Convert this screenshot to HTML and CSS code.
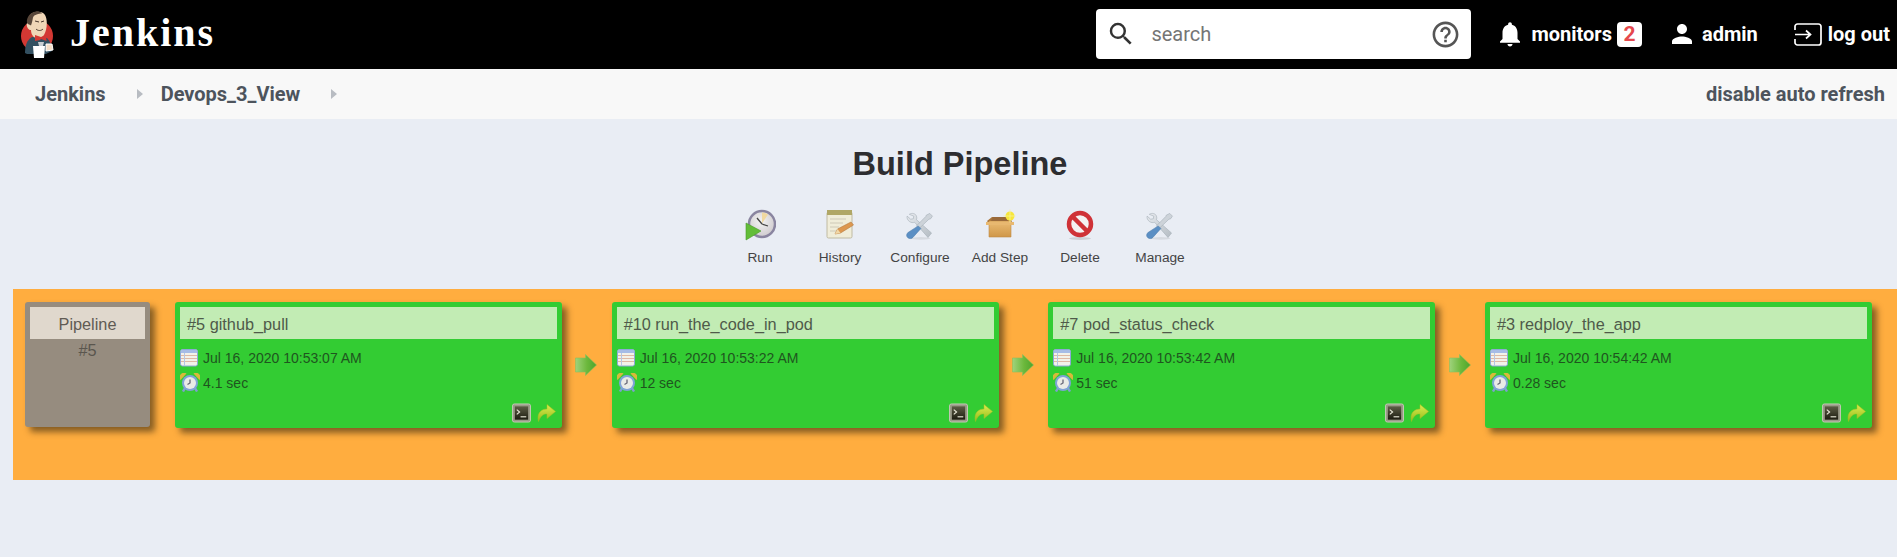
FILE: index.html
```html
<!DOCTYPE html>
<html lang="en">
<head>
<meta charset="utf-8">
<title>Build Pipeline [Jenkins]</title>
<link rel="stylesheet" href="styles.css">
</head>
<body>
<svg class="sprites" width="0" height="0" aria-hidden="true">
  <defs>
    <linearGradient id="gArrow" x1="0" y1="0" x2="1" y2="0"><stop offset="0" stop-color="#9fd27c"/><stop offset=".55" stop-color="#6cb83c"/><stop offset="1" stop-color="#4ea52c"/></linearGradient>
    <linearGradient id="gRedo" x1="0" y1="0" x2="0" y2="1"><stop offset="0" stop-color="#dcec4e"/><stop offset="1" stop-color="#93bc1c"/></linearGradient>
    <linearGradient id="gWrench" x1="0" y1="0" x2="1" y2="1"><stop offset="0" stop-color="#e8ebef"/><stop offset="1" stop-color="#b4bcc3"/></linearGradient>
    <linearGradient id="gBox" x1="0" y1="0" x2="0" y2="1"><stop offset="0" stop-color="#ecbd74"/><stop offset="1" stop-color="#cf9749"/></linearGradient>
    <linearGradient id="gConsole" x1="0" y1="0" x2="0" y2="1"><stop offset="0" stop-color="#5d5d46"/><stop offset="1" stop-color="#1c1c10"/></linearGradient>
    <radialGradient id="gClock" cx=".45" cy=".4" r=".7"><stop offset="0" stop-color="#f4f4f4"/><stop offset="1" stop-color="#c9c4c8"/></radialGradient>
    <symbol id="i-calendar" viewBox="0 0 18 18">
      <rect x=".5" y=".5" width="17" height="16.500" rx="2" fill="#f2f2ea" stroke="#8fa8d8"/>
      <rect x="1" y="1" width="16" height="3" fill="#a6bce6"/>
      <path d="M1 6.500h16M1 9.500h16M1 12.500h16" stroke="#dfb9a4" stroke-width="1"/>
      <path d="M4.500 4v13" stroke="#b6c6e4" stroke-width="1"/>
    </symbol>
    <symbol id="i-clock" viewBox="0 0 20 19">
      <path d="M5 15l-2 3.500M15 15l2 3.500" stroke="#7f9fd0" stroke-width="2.400"/>
      <path d="M.5 7a4.500 4.500 0 0 1 6-6.500zM19.500 7a4.500 4.500 0 0 0-6-6.500z" fill="#d9b93a"/>
      <circle cx="10" cy="10" r="8" fill="#7fa3d8"/>
      <circle cx="10" cy="10" r="6" fill="#e9ebe6"/>
      <path d="M10 6.500V10l-2.500 1.500" stroke="#667" stroke-width="1.300" fill="none"/>
    </symbol>
    <symbol id="i-arrow" viewBox="0 0 22 22">
      <path d="M.5 4h10V.5L21.500 11l-11 10.500V18H.5z" fill="url(#gArrow)" stroke="#8abf5e" stroke-width=".6"/>
    </symbol>
    <symbol id="i-console" viewBox="0 0 20 20">
      <rect x=".5" y=".5" width="19" height="19" rx="2" fill="#9a9a88" stroke="#c8c8ba"/>
      <rect x="3" y="3" width="14" height="14" fill="url(#gConsole)"/>
      <path d="M5 6.500l3 2.500-3 2.500" stroke="#e8e8d8" stroke-width="1.200" fill="none"/>
      <path d="M9 14h6" stroke="#e8e8d8" stroke-width="1.200"/>
    </symbol>
    <symbol id="i-redo" viewBox="0 0 19 19">
      <path d="M1.500 18C-.5 10 4 5.500 10 5.500V1l8.500 7-8.500 7v-4.500C6.500 10 3.500 12.500 1.500 18z" fill="url(#gRedo)" stroke="#a5c01e" stroke-width=".5"/>
    </symbol>
    <symbol id="i-tools" viewBox="-2 -3 36 36">
      <path d="M4 3c3-2 7-1 8 2 .6 1.700.4 3 0 4l17 15-4 5L10 12c-2 .6-4 .4-6-1-2-1.500-3-4-2.500-6l4 3.500 3-.5.500-3z" fill="url(#gWrench)" stroke="#a7b0b8" stroke-width=".7"/>
      <path d="M27 2l3 3-2 3-2 .5L15 19l-3-3L22.500 5.500 23 4z" fill="#cdd3d9" stroke="#a7b0b8" stroke-width=".7"/>
      <path d="M14 16l3 3-9 10c-2 2-4.500 1.500-6 0S.5 25.500 2.500 23.500z" fill="#5b8fc4" stroke="#4a7aaa" stroke-width=".6"/>
      <ellipse cx="17" cy="30" rx="11" ry="1.500" fill="#000" opacity=".08"/>
    </symbol>
  </defs>
</svg>

<header class="topbar">
  <a class="brand">
    <svg class="logo" viewBox="0 0 38 48" width="38" height="48" aria-hidden="true">
      <circle cx="18" cy="25" r="16" fill="#d33833"/>
      <path d="M6 42c0-8 2-13 7-16l15 1c3 3 5 8 5 13l-6 3H8z" fill="#335061"/>
      <path d="M10 6c2-6 13-7 16-2 3 5 2 15-1 20-3 4-9 4-11 1-1-1-2-3-2-6-3 0-5-4-4-7 1-1 2-1 2-1z" fill="#f0d6b7"/>
      <path d="M8 12C7 6 12 .5 18 .5c2 0 4 .5 5 2-3 0-8 1-9 4-.5 3-1 5-2 8-1-1-3-1-4-2.500z" fill="#59473a"/>
      <path d="M16 10l4 1M22 11l3-1M17 18c2 2 5 2 7 0" stroke="#49372c" stroke-width="1" fill="none"/>
      <path d="M16 24l6 2 5-2 .5 6-5.500-2-1 1-5 1z" fill="#d33833"/>
      <path d="M19 31h6l-1 4h-4z" fill="#c9ced2"/>
      <path d="M14 35h12l-1 12H15z" fill="#fff"/>
      <path d="M27 33h6l1 6-7 1z" fill="#f4ddc6" stroke="#fff"/>
    </svg>
    <span class="brand-name">Jenkins</span>
  </a>
  <div class="search">
    <svg class="search-icon" viewBox="0 0 24 24" aria-hidden="true"><path d="M15.500 14h-.790l-.280-.270A6.470 6.470 0 0 0 16 9.500 6.500 6.500 0 1 0 9.500 16c1.610 0 3.090-.590 4.230-1.570l.270.280v.790l5 4.990L20.490 19l-4.990-5zm-6 0C7.010 14 5 11.990 5 9.500S7.010 5 9.500 5 14 7.010 14 9.500 11.990 14 9.500 14z"/></svg>
    <span class="search-text">search</span>
    <svg class="help-icon" viewBox="0 0 24 24" aria-hidden="true"><path d="M11 18h2v-2h-2v2zm1-16C6.480 2 2 6.480 2 12s4.480 10 10 10 10-4.480 10-10S17.520 2 12 2zm0 18c-4.410 0-8-3.590-8-8s3.590-8 8-8 8 3.590 8 8-3.590 8-8 8zm0-14c-2.210 0-4 1.790-4 4h2c0-1.100.9-2 2-2s2 .9 2 2c0 2-3 1.750-3 5h2c0-2.250 3-2.500 3-5 0-2.210-1.790-4-4-4z"/></svg>
  </div>
  <nav class="top-actions">
    <a class="top-link monitors">
      <svg class="top-icon" viewBox="0 0 24 24" aria-hidden="true"><path d="M12 22c1.100 0 2-.9 2-2h-4c0 1.100.9 2 2 2zm6-6v-5c0-3.070-1.630-5.640-4.500-6.320V4c0-.830-.670-1.500-1.500-1.500s-1.500.670-1.500 1.500v.680C7.640 5.360 6 7.920 6 11v5l-2 2v1h16v-1l-2-2z"/></svg>
      <span class="monitors-label">monitors</span><span class="badge">2</span>
    </a>
    <a class="top-link admin">
      <svg class="top-icon" viewBox="0 0 24 24" aria-hidden="true"><path d="M12 12c2.210 0 4-1.790 4-4s-1.790-4-4-4-4 1.790-4 4 1.790 4 4 4zm0 2c-2.670 0-8 1.340-8 4v2h16v-2c0-2.660-5.330-4-8-4z"/></svg>
      <span>admin</span>
    </a>
    <a class="top-link logout">
      <svg class="logout-icon" viewBox="0 0 28 23" aria-hidden="true"><path d="M1 7V3.500A2.500 2.500 0 0 1 3.500 1h21A2.500 2.500 0 0 1 27 3.500v16a2.500 2.500 0 0 1-2.500 2.500h-21A2.500 2.500 0 0 1 1 19.500V16" fill="none" stroke="#fff" stroke-width="1.700"/><path d="M1 11.500h15M12 7.500l4.500 4-4.500 4" fill="none" stroke="#fff" stroke-width="1.700"/></svg>
      <span>log out</span>
    </a>
  </nav>
</header>

<div class="crumbs">
  <a class="crumb">Jenkins</a><span class="caret"></span>
  <a class="crumb">Devops_3_View</a><span class="caret"></span>
  <a class="refresh">disable auto refresh</a>
</div>

<main class="page">
  <h1 class="title">Build Pipeline</h1>
  <ul class="tools">
    <li class="tool">
      <svg class="tool-icon" viewBox="0 0 32 32" aria-hidden="true">
        <circle cx="18" cy="15" r="13" fill="url(#gClock)" stroke="#8a85a0" stroke-width="2.500"/>
        <path d="M18 3.500a11.500 11.500 0 0 1 6 2l-6 9z" fill="#f0d8a0"/>
        <path d="M18 15l-5-6M18 15l6 2" stroke="#444" stroke-width="1.300"/>
        <path d="M2 14l15 8-15 9z" fill="#62bd38" stroke="#4a9a28" stroke-width=".6"/>
      </svg>
      <span>Run</span>
    </li>
    <li class="tool">
      <svg class="tool-icon" viewBox="0 0 32 32" aria-hidden="true">
        <rect x="3" y="3" width="25" height="26" rx="1.500" fill="#f0edd9" stroke="#bfbaa2"/>
        <rect x="3" y="1" width="25" height="5" fill="#b0a766"/>
        <path d="M6 10h16M6 14h13M6 18h9M6 22h7" stroke="#cdc9b8" stroke-width="1.200"/>
        <path d="M11 25l2.500-5L27 13l2.500 3-13 8z" fill="#dd9850" stroke="#b57a40" stroke-width=".6"/>
        <path d="M11 25l2.500-5 3 4z" fill="#f0d8a8"/>
      </svg>
      <span>History</span>
    </li>
    <li class="tool">
      <svg class="tool-icon" aria-hidden="true"><use href="#i-tools"/></svg>
      <span>Configure</span>
    </li>
    <li class="tool">
      <svg class="tool-icon" viewBox="0 0 32 32" aria-hidden="true">
        <path d="M3 12l5-4h15l5 4-2 3H5z" fill="#a9743a"/>
        <path d="M5 12h22v16H5z" fill="url(#gBox)" stroke="#c08c44" stroke-width=".6"/>
        <path d="M9 8h13l2 4H7z" fill="#99693a"/>
        <path d="M2 13h28v3H2z" fill="#e8b870"/>
        <circle cx="26" cy="7" r="4.500" fill="#f7e63a"/>
        <path d="M26 .5v13M19.500 7h12" stroke="#f7f29a" stroke-width=".8"/>
      </svg>
      <span>Add Step</span>
    </li>
    <li class="tool">
      <svg class="tool-icon" viewBox="0 0 32 32" aria-hidden="true">
        <circle cx="16" cy="15" r="11" fill="#f4f2f2" stroke="#cf3237" stroke-width="4.500"/>
        <path d="M8.500 7.500l15 15" stroke="#cf3237" stroke-width="4.500"/>
        <ellipse cx="16" cy="29.500" rx="11" ry="1.500" fill="#000" opacity=".12"/>
      </svg>
      <span>Delete</span>
    </li>
    <li class="tool">
      <svg class="tool-icon" aria-hidden="true"><use href="#i-tools"/></svg>
      <span>Manage</span>
    </li>
  </ul>

  <section class="pipeline">
    <article class="box revision">
      <div class="box-head">Pipeline</div>
      <div class="box-rev">#5</div>
    </article>

    <article class="box build">
      <div class="box-head">#5 github_pull</div>
      <div class="meta"><svg class="meta-icon"><use href="#i-calendar"/></svg>Jul 16, 2020 10:53:07 AM</div>
      <div class="meta"><svg class="clock-icon"><use href="#i-clock"/></svg>4.1 sec</div>
      <div class="box-actions"><svg class="act"><use href="#i-console"/></svg><svg class="act"><use href="#i-redo"/></svg></div>
    </article>
    <div class="link"><svg class="link-arrow"><use href="#i-arrow"/></svg></div>

    <article class="box build">
      <div class="box-head">#10 run_the_code_in_pod</div>
      <div class="meta"><svg class="meta-icon"><use href="#i-calendar"/></svg>Jul 16, 2020 10:53:22 AM</div>
      <div class="meta"><svg class="clock-icon"><use href="#i-clock"/></svg>12 sec</div>
      <div class="box-actions"><svg class="act"><use href="#i-console"/></svg><svg class="act"><use href="#i-redo"/></svg></div>
    </article>
    <div class="link"><svg class="link-arrow"><use href="#i-arrow"/></svg></div>

    <article class="box build">
      <div class="box-head">#7 pod_status_check</div>
      <div class="meta"><svg class="meta-icon"><use href="#i-calendar"/></svg>Jul 16, 2020 10:53:42 AM</div>
      <div class="meta"><svg class="clock-icon"><use href="#i-clock"/></svg>51 sec</div>
      <div class="box-actions"><svg class="act"><use href="#i-console"/></svg><svg class="act"><use href="#i-redo"/></svg></div>
    </article>
    <div class="link"><svg class="link-arrow"><use href="#i-arrow"/></svg></div>

    <article class="box build">
      <div class="box-head">#3 redploy_the_app</div>
      <div class="meta"><svg class="meta-icon"><use href="#i-calendar"/></svg>Jul 16, 2020 10:54:42 AM</div>
      <div class="meta"><svg class="clock-icon"><use href="#i-clock"/></svg>0.28 sec</div>
      <div class="box-actions"><svg class="act"><use href="#i-console"/></svg><svg class="act"><use href="#i-redo"/></svg></div>
    </article>
  </section>
</main>
</body>
</html>
```
FILE: styles.css
```css
* { box-sizing: border-box; }
html, body { margin: 0; padding: 0; height: 100%; overflow: hidden; }
body { background: #e9edf4; font-family: "Liberation Sans", Arial, sans-serif; color: #333; }
.sprites { display: block; width: 0; height: 0; }

.topbar { display: flex; align-items: center; height: 69px; padding-right: 7px; background: #000; color: #fff; font-family: Roboto, sans-serif; }
.brand { display: flex; align-items: center; margin-left: 19px; }
.logo { display: block; width: 38px; height: 48px; }
.brand-name { margin-left: 13px; padding-bottom: 4px; font-family: "Liberation Serif", serif; font-weight: 700; font-size: 40px; letter-spacing: 2px; color: #fff; }
.search { display: flex; align-items: center; width: 375px; height: 50px; margin: 0 0 1px auto; background: #fff; border-radius: 4px; padding: 0 10px; }
.search-icon { width: 30px; height: 30px; fill: #333; flex: none; }
.search-text { margin-left: 15px; font-size: 20px; color: #757575; flex: 1; }
.help-icon { width: 31px; height: 31px; fill: #555; flex: none; }
.top-actions { display: flex; align-items: center; margin: 0 0 1px 24px; font-size: 20px; font-weight: 700; }
.top-link { display: flex; align-items: center; }
.top-icon { width: 30px; height: 30px; fill: #fff; flex: none; }
.monitors-label { margin-left: 6px; }
.badge { display: flex; align-items: center; justify-content: center; width: 25px; height: 25px; margin-left: 5px; background: #fff; border-radius: 4px; color: #e5484d; font-size: 21px; }
.admin { margin-left: 25px; }
.admin span { margin-left: 5px; }
.logout { margin-left: 36px; }
.logout-icon { width: 28px; height: 23px; flex: none; }
.logout span { margin-left: 6px; }

.crumbs { display: flex; align-items: center; height: 50px; padding: 0 12px 0 35px; background: #f8f8f8; font-family: Roboto, sans-serif; font-weight: 700; font-size: 20px; color: #4d545d; }
.caret { width: 0; height: 0; margin: 0 18px 0 31px; border-left: 6px solid #b8bcc2; border-top: 5px solid transparent; border-bottom: 5px solid transparent; }
.refresh { margin-left: auto; }

.page { display: block; }
.title { margin: 0; padding: 27px 0 0 23px; height: 76px; text-align: center; font-size: 32.500px; line-height: 37px; font-weight: 700; color: #2d2d30; }
.tools { display: flex; justify-content: center; margin: 0; padding: 14px 0 0 23px; list-style: none; }
.tool { display: flex; flex-direction: column; align-items: center; width: 80px; font-size: 13.700px; color: #444; }
.tool-icon { display: block; width: 32px; height: 32px; margin-bottom: 8px; }
.tool span { line-height: 18px; white-space: nowrap; }

.pipeline { display: flex; align-items: flex-start; height: 191px; margin: 22px 0 0 13px; padding: 13px 0 0 12px; background: #ffad3f; }
.box { flex: none; border-radius: 3px; padding: 5px; box-shadow: 5px 5px 6px rgba(70, 50, 20, .65); }
.revision { width: 125px; height: 125px; margin-right: 25px; background: #968c7f; text-align: center; color: #5a564e; font-size: 16.300px; }
.build { width: 387px; height: 126px; background: #33cc33; }
.box-head { height: 32px; line-height: 34px; font-size: 16.300px; color: #4f5a4a; background: #c2ecb4; padding-left: 7px; }
.revision .box-head { background: #e0d8cd; padding-left: 0; color: #605b54; }
.box-rev { line-height: 22px; }
.meta { display: flex; align-items: center; height: 25px; font-size: 14px; color: #1f551f; }
.box-head + .meta { margin-top: 6px; }
.meta-icon { width: 18px; height: 18px; margin-right: 5px; flex: none; }
.clock-icon { width: 20px; height: 19px; margin-right: 3px; flex: none; }
.box-actions { display: flex; justify-content: flex-end; align-items: center; gap: 6px; margin-top: 8px; padding-right: 1px; }
.act { width: 19px; height: 20px; flex: none; }
.link { flex: none; width: 49.670px; display: flex; justify-content: center; padding: 52px 1px 0 0; }
.link-arrow { width: 22px; height: 22px; }
```
